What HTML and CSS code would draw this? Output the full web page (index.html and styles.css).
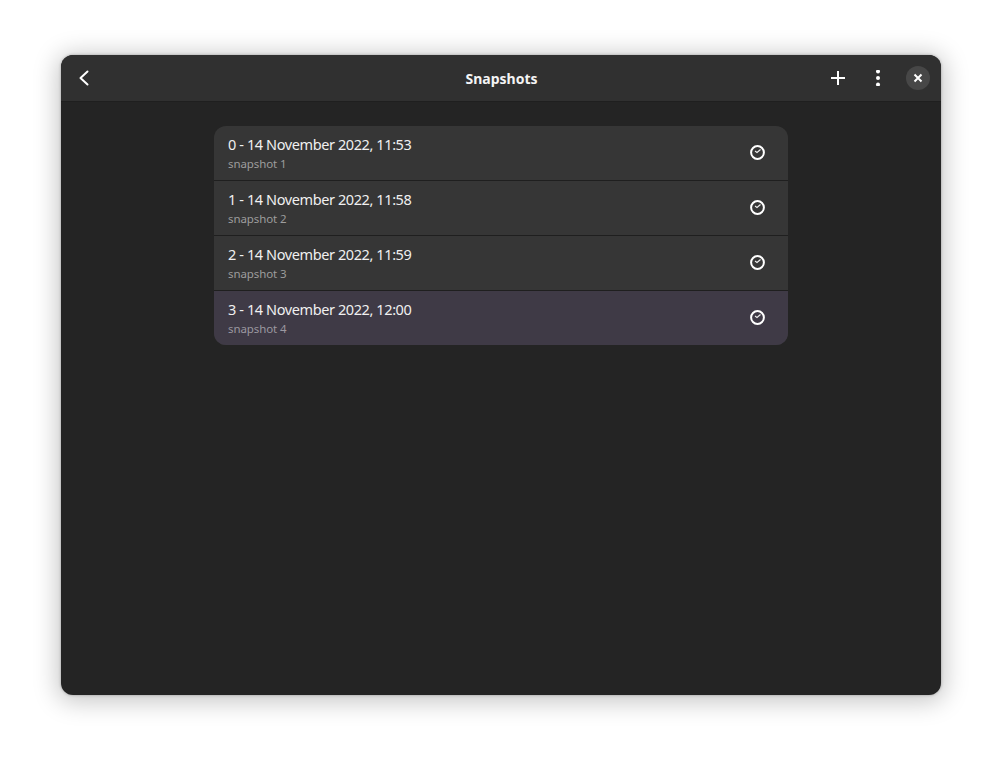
FILE: index.html
```html
<!DOCTYPE html>
<html lang="en">
<head>
<meta charset="utf-8">
<title>Snapshots</title>
<link rel="stylesheet" href="styles.css">
</head>
<body>
<div class="window">
  <header class="headerbar">
    <button class="hb-btn back" aria-label="Back">
      <svg width="16" height="16" viewBox="0 0 16 16"><path d="M11 1.500 4 8l7 6.500" transform="translate(-.5 0)" fill="none" stroke="#fff" stroke-width="2" stroke-linecap="round" stroke-linejoin="round"/></svg>
    </button>
    <div class="title">Snapshots</div>
    <button class="hb-btn add" aria-label="Add">
      <svg width="16" height="16" viewBox="0 0 16 16"><path d="M8 1v14M1 8h14" fill="none" stroke="#fff" stroke-width="2"/></svg>
    </button>
    <button class="hb-btn menu" aria-label="Menu">
      <svg width="16" height="16" viewBox="0 0 16 16"><circle cx="8" cy="1.500" r="2" fill="#fff"/><circle cx="8" cy="8" r="2" fill="#fff"/><circle cx="8" cy="14.500" r="2" fill="#fff"/></svg>
    </button>
    <button class="close" aria-label="Close">
      <svg width="10" height="10" viewBox="0 0 10 10"><path d="M1.500 1.500l7 7M8.500 1.500l-7 7" fill="none" stroke="#fff" stroke-width="2"/></svg>
    </button>
  </header>
  <main class="content">
    <ul class="list">
      <li class="row">
        <div class="labels"><div class="row-title">0 - 14 November 2022, 11:53</div><div class="row-sub">snapshot 1</div></div>
        <svg class="clock" width="15" height="15" viewBox="0 0 15 15"><circle cx="7.500" cy="7.500" r="6.400" fill="none" stroke="#fff" stroke-width="2"/><path d="M5 6 7 7.500 10.500 4.500" fill="none" stroke="#f0f0f0" stroke-width="1.100"/></svg>
      </li>
      <li class="row">
        <div class="labels"><div class="row-title">1 - 14 November 2022, 11:58</div><div class="row-sub">snapshot 2</div></div>
        <svg class="clock" width="15" height="15" viewBox="0 0 15 15"><circle cx="7.500" cy="7.500" r="6.400" fill="none" stroke="#fff" stroke-width="2"/><path d="M5 6 7 7.500 10.500 4.500" fill="none" stroke="#f0f0f0" stroke-width="1.100"/></svg>
      </li>
      <li class="row">
        <div class="labels"><div class="row-title">2 - 14 November 2022, 11:59</div><div class="row-sub">snapshot 3</div></div>
        <svg class="clock" width="15" height="15" viewBox="0 0 15 15"><circle cx="7.500" cy="7.500" r="6.400" fill="none" stroke="#fff" stroke-width="2"/><path d="M5 6 7 7.500 10.500 4.500" fill="none" stroke="#f0f0f0" stroke-width="1.100"/></svg>
      </li>
      <li class="row current">
        <div class="labels"><div class="row-title">3 - 14 November 2022, 12:00</div><div class="row-sub">snapshot 4</div></div>
        <svg class="clock" width="15" height="15" viewBox="0 0 15 15"><circle cx="7.500" cy="7.500" r="6.400" fill="none" stroke="#fff" stroke-width="2"/><path d="M5 6 7 7.500 10.500 4.500" fill="none" stroke="#f0f0f0" stroke-width="1.100"/></svg>
      </li>
    </ul>
  </main>
</div>
</body>
</html>
```

FILE: styles.css
```css
* { box-sizing: border-box; }
html, body { height: 100%; }
body {
  margin: 0;
  padding: 55px 61px 67px;
  background: #fff;
  font-family: "Noto Sans", "Open Sans", sans-serif;
  overflow: hidden;
}
.window {
  width: 880px;
  height: 640px;
  background: #242424;
  border-radius: 12px;
  overflow: hidden;
  box-shadow: 0 3px 24px 4px rgba(0,0,0,.22), 0 0 3px rgba(0,0,0,.3);
  display: flex;
  flex-direction: column;
}
.headerbar {
  height: 47px;
  flex: none;
  background: #303030;
  border-bottom: 1px solid #1f1f1f;
  display: flex;
  align-items: center;
  padding: 0 11px 0 16px;
  color: #fff;
}
.hb-btn, .close {
  border: 0;
  background: none;
  padding: 0;
  display: flex;
  align-items: center;
  justify-content: center;
}
.hb-btn { width: 16px; height: 16px; }
.title {
  flex: 1;
  text-align: center;
  font-size: 14px;
  font-weight: 700;
  color: #f4f4f4;
  margin-left: 80px;
}
.add { margin-right: 24px; }
.menu { margin-right: 20px; }
.close {
  width: 24px;
  height: 24px;
  border-radius: 50%;
  background: #474747;
}
.content { flex: 1; padding: 24px 153px 0; }
.list {
  list-style: none;
  margin: 0;
  padding: 0;
  border-radius: 12px;
  overflow: hidden;
  background: #363636;
}
.row {
  height: 55px;
  display: flex;
  align-items: center;
  justify-content: space-between;
  padding: 0 23px 0 14px;
  border-bottom: 1px solid #1f1f1f;
}
.row:last-child { border-bottom: 0; height: 54px; }
.current { background: #3f3a46; }
.row-title { font-size: 14.500px; line-height: 20px; letter-spacing: -.4px; color: #f0f0f0; }
.row-sub { font-size: 11.500px; line-height: 16px; letter-spacing: -.1px; margin-top: 2px; color: #9d9d9d; }
.current .row-sub { color: #9b98a0; }
.clock { flex: none; margin-bottom: 1px; }
```
